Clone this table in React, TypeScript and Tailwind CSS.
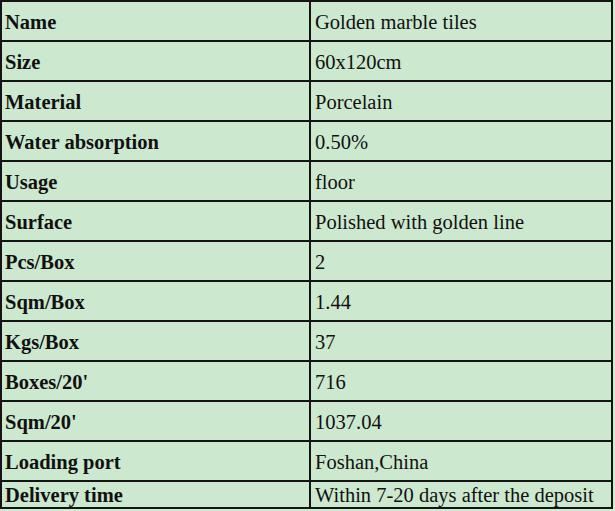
import React from "react";

const rows: [string, string][] = [
  ["Name", "Golden marble tiles"],
  ["Size", "60x120cm"],
  ["Material", "Porcelain"],
  ["Water absorption", "0.50%"],
  ["Usage", "floor"],
  ["Surface", "Polished with golden line"],
  ["Pcs/Box", "2"],
  ["Sqm/Box", "1.44"],
  ["Kgs/Box", "37"],
  ["Boxes/20'", "716"],
  ["Sqm/20'", "1037.04"],
  ["Loading port", "Foshan,China"],
  ["Delivery time", "Within 7-20 days after the deposit"],
];

export default function App() {
  return (
    <div
      className="w-[615px] h-[511px] bg-[#d2ead4] overflow-hidden"
      style={{ fontFamily: '"Liberation Serif", "Times New Roman", serif' }}
    >
      <div className="grid grid-cols-[307px_300px] grid-rows-[repeat(12,38px)_25px] gap-[2px] p-[2px] bg-[#141414] w-[613px] text-[20.5px] text-[#111]">
        {rows.map(([k, v]) => (
          <React.Fragment key={k}>
            <div className="bg-[#cce8cf] flex items-center pl-[3px] pt-[2px] font-bold leading-none">
              {k}
            </div>
            <div className="bg-[#cce8cf] flex items-center pl-[4px] pt-[2px] leading-none">
              {v}
            </div>
          </React.Fragment>
        ))}
      </div>
    </div>
  );
}
